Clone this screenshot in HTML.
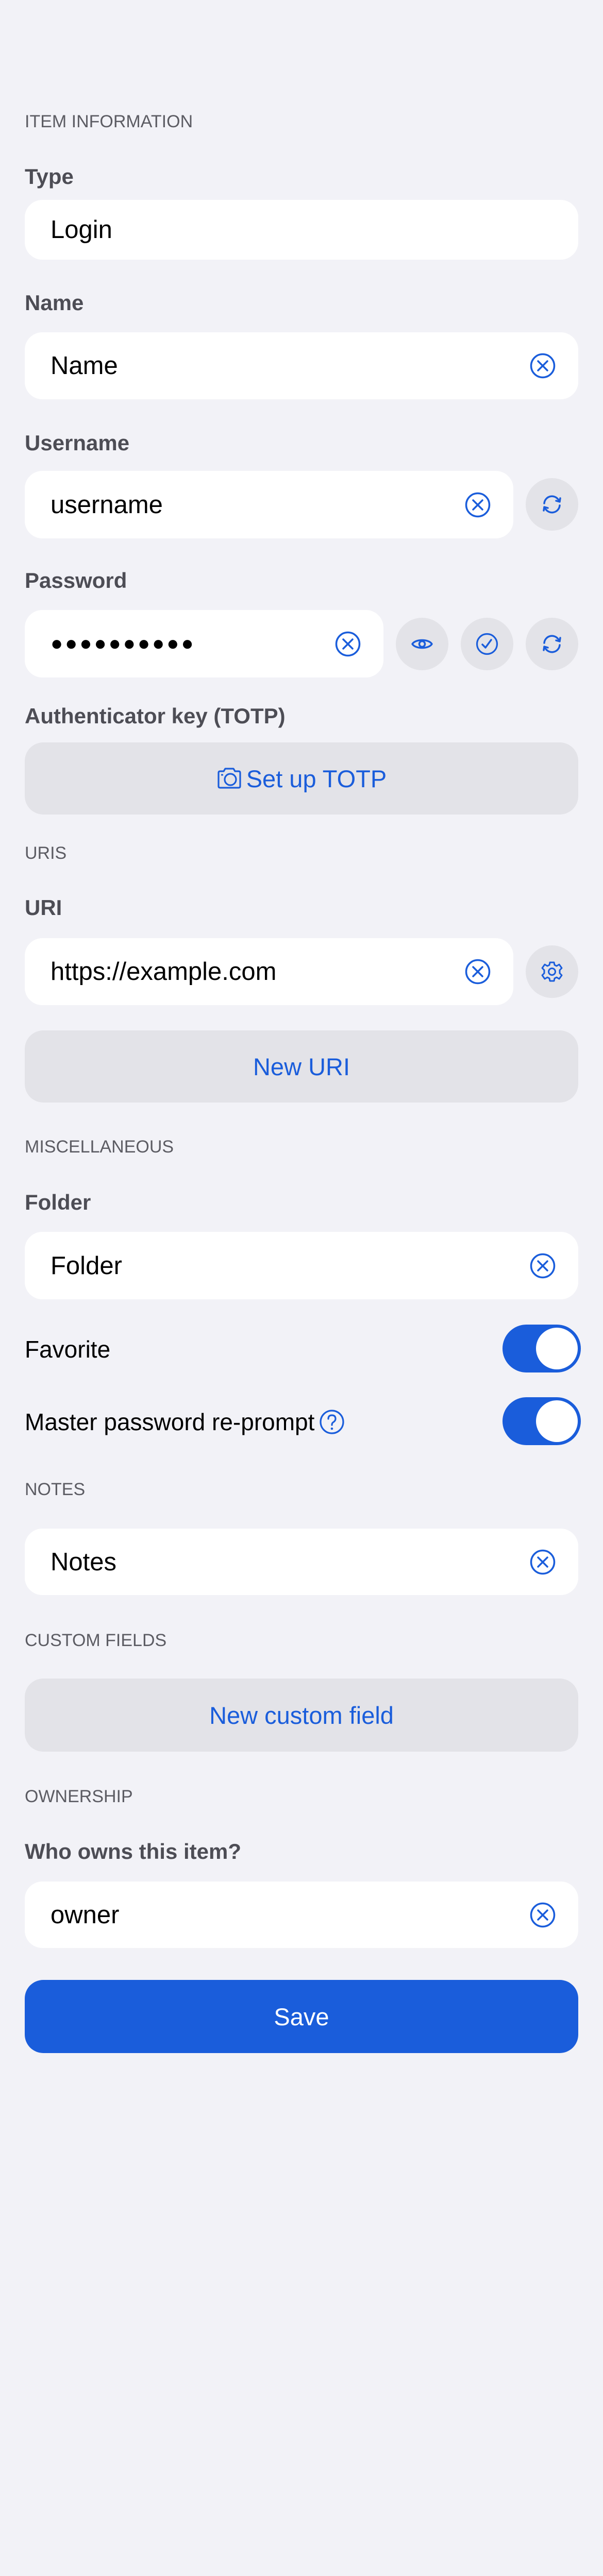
<!DOCTYPE html>
<html><head><meta charset="utf-8"><style>
html,body{margin:0;padding:0}
html{width:1170px;height:5064px;overflow:hidden}
body{width:1170px;height:5064px;background:#f2f2f7;position:relative;font-family:"Liberation Sans",sans-serif;overflow:hidden}
.a{position:absolute}
.sec{position:absolute;left:48px;font-size:34px;color:#5c5c63;height:50px;line-height:50px}
.lbl{position:absolute;left:48px;font-size:42px;font-weight:bold;color:#4d4d55;height:56px;line-height:56px}
.box{position:absolute;left:48px;background:#fff;border-radius:34px}
.box .t{position:absolute;left:50px;top:0;bottom:0;display:flex;align-items:center;font-size:49px;color:#000}
.clr{position:absolute;top:50%;margin-top:-26px;width:52px;height:52px}
.btn{position:absolute;left:48px;width:1074px;background:#e3e3e8;border-radius:36px;display:flex;align-items:center;justify-content:center;color:#1a5ddb;font-size:47px}
.cb{position:absolute;width:102px;height:102px;border-radius:51px;background:#e3e3e8;display:flex;align-items:center;justify-content:center}
.tg{position:absolute;left:975px;width:152px;height:93px;border-radius:47px;background:#1a5ddb}
.tg i{position:absolute;right:6px;top:6px;width:81px;height:81px;border-radius:41px;background:#fff}
.row{position:absolute;left:48px;font-size:46px;color:#000;height:60px;line-height:60px;display:flex;align-items:center}
</style></head><body>
<svg width="0" height="0" style="position:absolute;top:0;left:0;overflow:hidden"><defs>
<symbol id="x" viewBox="0 0 52 52"><circle cx="26" cy="26" r="22.5" fill="none" stroke="#1a5ddb" stroke-width="3.5"/><path d="M17 17L35 35M35 17L17 35" stroke="#1a5ddb" stroke-width="3.5" stroke-linecap="round"/></symbol>
<symbol id="r" viewBox="0 0 44 44"><path d="M7 20A15 15 0 0 1 36 16M37 24A15 15 0 0 1 8 28" fill="none" stroke="#1a5ddb" stroke-width="3.5" stroke-linecap="round"/><path d="M30 15L37 17L38 10M14 29L7 27L6 34" fill="none" stroke="#1a5ddb" stroke-width="3.5" stroke-linecap="round" stroke-linejoin="round"/></symbol>
</defs></svg>

<div class="sec" style="top:211px">ITEM INFORMATION</div>

<div class="lbl" style="top:315px">Type</div>
<div class="box" style="top:388px;width:1074px;height:116px"><div class="t">Login</div></div>

<div class="lbl" style="top:560px">Name</div>
<div class="box" style="top:645px;width:1074px;height:130px"><div class="t">Name</div><svg class="clr" style="left:979px"><use href="#x"/></svg></div>

<div class="lbl" style="top:832px">Username</div>
<div class="box" style="top:914px;width:948px;height:131px"><div class="t">username</div><svg class="clr" style="left:853px"><use href="#x"/></svg></div>
<div class="cb" style="left:1020px;top:928px"><svg width="44" height="44"><use href="#r"/></svg></div>

<div class="lbl" style="top:1099px">Password</div>
<div class="box" style="top:1184px;width:696px;height:131px"><div class="t" style="font-size:40px;letter-spacing:4px">●●●●●●●●●●</div><svg class="clr" style="left:601px"><use href="#x"/></svg></div>
<div class="cb" style="left:768px;top:1199px"><svg width="44" height="44" viewBox="0 0 44 44"><path d="M3 22C9 12 35 12 41 22C35 32 9 32 3 22Z" fill="none" stroke="#1a5ddb" stroke-width="3.5" stroke-linejoin="round"/><circle cx="22" cy="22" r="5.5" fill="none" stroke="#1a5ddb" stroke-width="3.5"/></svg></div>
<div class="cb" style="left:894px;top:1199px"><svg width="44" height="44" viewBox="0 0 44 44"><circle cx="22" cy="22" r="19.5" fill="none" stroke="#1a5ddb" stroke-width="3.2"/><path d="M13 23L19 29L30 14" fill="none" stroke="#1a5ddb" stroke-width="3.5" stroke-linecap="round" stroke-linejoin="round"/></svg></div>
<div class="cb" style="left:1020px;top:1199px"><svg width="44" height="44"><use href="#r"/></svg></div>

<div class="lbl" style="top:1362px">Authenticator key (TOTP)</div>
<div class="btn" style="top:1441px;height:140px"><svg width="50" height="50" viewBox="0 0 50 50" style="margin-right:8px"><path d="M4 14Q4 11 7 11H14L17 6H33L36 11H43Q46 11 46 14V40Q46 43 43 43H7Q4 43 4 40Z" fill="none" stroke="#1a5ddb" stroke-width="3.2" stroke-linejoin="round"/><circle cx="27" cy="27" r="11" fill="none" stroke="#1a5ddb" stroke-width="3.2"/><path d="M9 18H13" stroke="#1a5ddb" stroke-width="3"/></svg>Set up TOTP</div>

<div class="sec" style="top:1631px">URIS</div>
<div class="lbl" style="top:1734px">URI</div>
<div class="box" style="top:1821px;width:948px;height:130px"><div class="t">https://example.com</div><svg class="clr" style="left:853px"><use href="#x"/></svg></div>
<div class="cb" style="left:1020px;top:1835px"><svg width="44" height="44" viewBox="0 0 44 44"><path d="M18 4H26L27 9L31 11L36 8L41 15L37 19V25L41 29L36 36L31 33L27 35L26 40H18L17 35L13 33L8 36L3 29L7 25V19L3 15L8 8L13 11L17 9Z" fill="none" stroke="#1a5ddb" stroke-width="3" stroke-linejoin="round"/><circle cx="22" cy="22" r="6.5" fill="none" stroke="#1a5ddb" stroke-width="3"/></svg></div>
<div class="btn" style="top:2000px;height:140px">New URI</div>

<div class="sec" style="top:2201px">MISCELLANEOUS</div>
<div class="lbl" style="top:2306px">Folder</div>
<div class="box" style="top:2391px;width:1074px;height:131px"><div class="t">Folder</div><svg class="clr" style="left:979px"><use href="#x"/></svg></div>

<div class="row" style="top:2589px">Favorite</div>
<div class="tg" style="top:2571px"><i></i></div>
<div class="row" style="top:2730px">Master password re-prompt<svg width="52" height="52" viewBox="0 0 52 52" style="margin-left:8px"><circle cx="26" cy="26" r="22" fill="none" stroke="#1a5ddb" stroke-width="3.2"/><path d="M19 20Q19 13 26 13Q33 13 33 20Q33 24 28 27Q26 28.5 26 32" fill="none" stroke="#1a5ddb" stroke-width="3.2" stroke-linecap="round"/><circle cx="26" cy="39" r="2.3" fill="#1a5ddb"/></svg></div>
<div class="tg" style="top:2712px"><i></i></div>

<div class="sec" style="top:2866px">NOTES</div>
<div class="box" style="top:2967px;width:1074px;height:129px"><div class="t">Notes</div><svg class="clr" style="left:979px"><use href="#x"/></svg></div>

<div class="sec" style="top:3159px">CUSTOM FIELDS</div>
<div class="btn" style="top:3258px;height:142px">New custom field</div>

<div class="sec" style="top:3462px">OWNERSHIP</div>
<div class="lbl" style="top:3566px">Who owns this item?</div>
<div class="box" style="top:3652px;width:1074px;height:129px"><div class="t">owner</div><svg class="clr" style="left:979px"><use href="#x"/></svg></div>

<div class="btn" style="top:3843px;height:142px;background:#1a5ddb;color:#fff">Save</div>
</body></html>
